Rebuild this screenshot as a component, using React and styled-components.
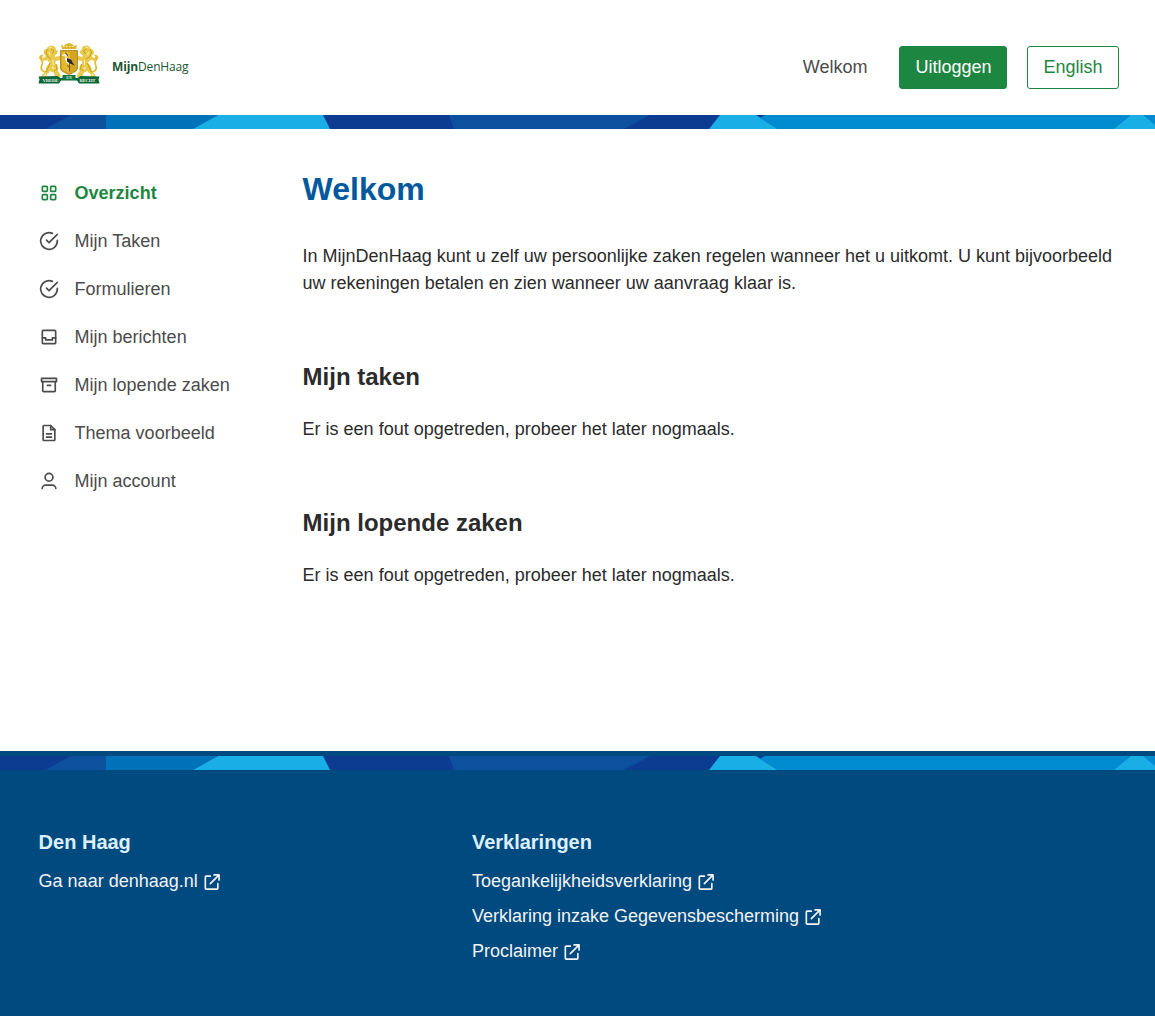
import React from "react";
import styled, { createGlobalStyle, css } from "styled-components";

const GlobalStyle = createGlobalStyle`
  *, *::before, *::after { box-sizing: border-box; }
  body {
    margin: 0;
    background: #fff;
    color: #2b2b2b;
    font-family: "Liberation Sans", Arial, sans-serif;
    font-size: 18px;
    line-height: 27px;
  }
  h1, h2, h3, p, ul { margin: 0; padding: 0; }
  ul { list-style: none; }
  a { color: inherit; text-decoration: none; }
`;

const Page = styled.div`
  display: flex;
  flex-direction: column;
  min-height: 1016px;
`;

const Header = styled.header`
  display: flex;
  align-items: center;
  justify-content: space-between;
  height: 115px;
  padding: 19px 36px 0 38px;
`;

const Brand = styled.a`
  display: flex;
  align-items: center;
  gap: 12px;
  padding-bottom: 6px;
`;

const Crest = styled.svg`
  display: block;
  width: 62px;
  height: 44px;
`;

const Wordmark = styled.span`
  padding-top: 6px;
  color: #1a5632;
  font: 400 12px/16px "Open Sans", "Noto Sans", sans-serif;
  letter-spacing: -0.14px;

  b { font-weight: 700; }
`;

const Actions = styled.div`
  display: flex;
  align-items: center;
  gap: 20px;
`;

const UserName = styled.span`
  margin-right: 11.500px;
  padding-top: 1px;
  color: #4b4b4b;
`;

const Button = styled.button`
  height: 43px;
  padding: 1px 15.500px 0;
  border: 1px solid #1d8640;
  border-radius: 3px;
  font: inherit;
  ${({ $primary }) =>
    $primary
      ? css`width: 108px; background: #1d8640; color: #fff;`
      : css`width: 92px; background: #fff; color: #1d8640;`}
`;

const Strip = styled.svg`
  display: block;
  width: 100%;
  height: 14px;
`;

const Body = styled.div`
  display: grid;
  grid-template-columns: 264px 1fr;
  height: 622px;
  padding: 40px 36px 0 38.600px;
`;

const NavList = styled.ul`
  display: flex;
  flex-direction: column;
`;

const NavLink = styled.a`
  display: flex;
  align-items: center;
  gap: 16px;
  height: 48px;
  color: ${({ $active }) => ($active ? "#1d8640" : "#4b4b4b")};
  font-weight: ${({ $active }) => ($active ? 700 : 400)};

  svg { margin-bottom: 1px; }
`;

const Glyph = styled.svg`
  display: block;
  flex: none;
  width: 20px;
  height: 20px;
  fill: none;
  stroke: currentColor;
  stroke-width: 2;
  stroke-linecap: round;
  stroke-linejoin: round;
`;

const Title = styled.h1`
  color: #00599d;
  font-size: 32px;
  line-height: 40px;
`;

const Intro = styled.p`
  margin-top: 34px;
`;

const Section = styled.section`
  margin-top: 64px;
`;

const SectionTitle = styled.h2`
  font-size: 24px;
  line-height: 32px;
`;

const Notice = styled.p`
  margin-top: 23px;
`;

const Footer = styled.footer`
  flex: 1;
  padding-top: 5px;
  background: #004a80;
`;

const FooterColumns = styled.div`
  display: grid;
  grid-template-columns: 433.300px 1fr;
  padding: 58px 36px 0 38.600px;
  color: #f3f3f3;
`;

const FooterTitle = styled.h3`
  color: #dceffb;
  font-size: 20px;
  line-height: 28px;
  margin-bottom: 8px;
`;

const FooterLink = styled.a`
  display: flex;
  align-items: center;
  gap: 4px;
  height: 35px;
`;

const icons = {
  grid: (
    <>
      <rect x="4" y="4" width="6" height="6" rx="1" />
      <rect x="14" y="4" width="6" height="6" rx="1" />
      <rect x="4" y="14" width="6" height="6" rx="1" />
      <rect x="14" y="14" width="6" height="6" rx="1" />
    </>
  ),
  check: (
    <>
      <path d="M22 11.08V12a10 10 0 1 1-5.93-9.14" />
      <path d="M22 4 12 14.01l-3-3" />
    </>
  ),
  inbox: (
    <>
      <rect x="4" y="4" width="16" height="16" rx="1" />
      <path d="M4 13h4v2.500h8V13h4" />
    </>
  ),
  archive: (
    <>
      <rect x="3" y="4" width="18" height="4" rx="0.500" />
      <path d="M4.500 8v11a1 1 0 0 0 1 1h13a1 1 0 0 0 1-1V8M10 12.500h4" />
    </>
  ),
  file: (
    <>
      <path d="M14 3v5h5" />
      <path d="M18 21H6a1 1 0 0 1-1-1V4a1 1 0 0 1 1-1h8l5 5v12a1 1 0 0 1-1 1zM9 13h6M9 17h6" />
    </>
  ),
  user: (
    <>
      <circle cx="12" cy="7.500" r="4.700" />
      <path d="M3.800 21c0-2.500 2.200-4 4.200-4h8c2 0 4.200 1.500 4.200 4" />
    </>
  ),
  external: (
    <>
      <path d="M10 5H5a1 1 0 0 0-1 1v13.500a1 1 0 0 0 1 1h13a1 1 0 0 0 1-1V14" />
      <path d="M10 14 20.500 3.500M14.500 3.500h6V9.500" />
    </>
  ),
};

function Icon({ name }) {
  return (
    <Glyph viewBox="0 0 24 24" aria-hidden="true">
      {icons[name]}
    </Glyph>
  );
}

function PatternStrip() {
  return (
    <Strip viewBox="0 0 1155 14" preserveAspectRatio="none" aria-hidden="true">
      <rect width="1155" height="14" fill="#0c3c91" />
      <path d="M45 14 71 0h35v14z" fill="#0d509d" />
      <path d="M106 0h112l-25 14h-87z" fill="#0072ba" />
      <path d="M193 14 218 0h105l7 14z" fill="#19aee5" />
      <path d="M449 0h201l-26 14H454z" fill="#0d509d" />
      <path d="M709 14 720 0h36l22 14z" fill="#19aee5" />
      <path d="m760 3 5-3h390v14H778z" fill="#008bcf" />
      <path d="m1114 14 17-14h12l12 10v4z" fill="#19aee5" />
    </Strip>
  );
}

function Lion() {
  return (
    <g>
      <path d="M11 30C6 31 2 28 3.500 24 5 21 5 19 2.500 17" fill="none" stroke="#e2bd35" strokeWidth="1.700" />
      <path d="M1 16c0-3 3-4 5-3-2 1-2 2-1 4-1 1-3 1-4-1z" fill="#e2bd35" />
      <path
        d="M9 6c1-2 4-3 6-2 2 0 3 2 3 4l2 1-1 3-2 1v2l4-1 2 1-1 3-4 1-1 2c3 2 4 5 3 8l2 3 1 3h-6l-1-4-4-2-3 3-1 3H3l2-3 3-2c-1-4 1-7 4-9l-3-3-4 1-1-2 4-3-2-2c-1-2 0-5 3-5z"
        fill="#e8ca4d"
      />
      <path d="m9 7-1 4 2 4 3 2M12 21l-2 5-2 4M18 22l1 5-3 2M13 7l3 2-2 3" fill="none" stroke="#c49a1d" strokeWidth=".9" />
      <path d="m11 6 3-1M11 10l1 3M15 18v5M14 25l2 2M8 32l-2 2" fill="none" stroke="#f8eda5" strokeWidth="1.100" />
    </g>
  );
}

function CityCrest() {
  return (
    <Crest viewBox="0 0 62 44" role="img" aria-label="Den Haag">
      <Lion />
      <g transform="matrix(-1 0 0 1 61.500 0)">
        <Lion />
      </g>
      <path d="m24 7-1-4 3 1 2-2 3-1 3 1 2 2 3-1-1 4z" fill="#dcb42e" />
      <path d="M25 4.500h12" stroke="#fff0a2" strokeWidth="1" strokeDasharray="1.500 1.500" />
      <path d="M22.500 8.500h17V26c0 3-4 4.500-8.500 6.500-4.500-2-8.500-3.500-8.500-6.500z" fill="#d4a31f" stroke="#a77d13" strokeWidth=".8" />
      <path d="M24 10h8v21c-5-2-8-3-8-5z" fill="#efc437" opacity=".65" />
      <path d="m23.500 13.500 3.500-2 2 1.500-.5 2.500 4 1.500 3 4.500-4 1-3-2-1.500-3 .5-3z" fill="#f7f4e7" />
      <path d="m29 16 4 1.500 3.500 6L32 21.500l-3-2z" fill="#2a2b27" />
      <path d="m27 11 2 1 .5 2" fill="none" stroke="#30312b" strokeWidth=".8" />
      <path d="M31.500 21v8.500M31.500 25l-2.500-1.500" fill="none" stroke="#60421b" strokeWidth=".8" />
      <path d="m0.500 34.500 19-.5 3 2h17l3-2 19 .5-1 3 1 4H41l-2-3H23l-2 3H.5l1-4z" fill="#0e6636" />
      <path d="M24.500 33h13v5h-13z" fill="#0b7940" />
      <g fill="#e2eee2" fontFamily="Liberation Serif, serif" fontWeight="700" fontSize="5" textAnchor="middle">
        <text x="12.500" y="40" textLength="16">VREDE</text>
        <text x="31" y="36.800" fontSize="4">EN</text>
        <text x="49.500" y="40" textLength="16">RECHT</text>
      </g>
    </Crest>
  );
}

const navItems = [
  { label: "Overzicht", icon: "grid", active: true },
  { label: "Mijn Taken", icon: "check" },
  { label: "Formulieren", icon: "check" },
  { label: "Mijn berichten", icon: "inbox" },
  { label: "Mijn lopende zaken", icon: "archive" },
  { label: "Thema voorbeeld", icon: "file" },
  { label: "Mijn account", icon: "user" },
];

const footerGroups = [
  { title: "Den Haag", links: ["Ga naar denhaag.nl"] },
  {
    title: "Verklaringen",
    links: ["Toegankelijkheidsverklaring", "Verklaring inzake Gegevensbescherming", "Proclaimer"],
  },
];

const errorText = "Er is een fout opgetreden, probeer het later nogmaals.";

export default function App() {
  return (
    <>
      <GlobalStyle />
      <Page>
        <Header>
          <Brand href="#">
            <CityCrest />
            <Wordmark><b>Mijn</b>DenHaag</Wordmark>
          </Brand>
          <Actions>
            <UserName>Welkom</UserName>
            <Button $primary>Uitloggen</Button>
            <Button>English</Button>
          </Actions>
        </Header>
        <PatternStrip />
        <Body>
          <nav>
            <NavList>
              {navItems.map(({ label, icon, active }) => (
                <li key={label}>
                  <NavLink href="#" $active={active}>
                    <Icon name={icon} />
                    {label}
                  </NavLink>
                </li>
              ))}
            </NavList>
          </nav>
          <main>
            <Title>Welkom</Title>
            <Intro>
              In MijnDenHaag kunt u zelf uw persoonlijke zaken regelen wanneer het u uitkomt. U kunt bijvoorbeeld uw
              rekeningen betalen en zien wanneer uw aanvraag klaar is.
            </Intro>
            <Section>
              <SectionTitle>Mijn taken</SectionTitle>
              <Notice>{errorText}</Notice>
            </Section>
            <Section>
              <SectionTitle>Mijn lopende zaken</SectionTitle>
              <Notice>{errorText}</Notice>
            </Section>
          </main>
        </Body>
        <Footer>
          <PatternStrip />
          <FooterColumns>
            {footerGroups.map(({ title, links }) => (
              <div key={title}>
                <FooterTitle>{title}</FooterTitle>
                <ul>
                  {links.map((link) => (
                    <li key={link}>
                      <FooterLink href="#">
                        {link}
                        <Icon name="external" />
                      </FooterLink>
                    </li>
                  ))}
                </ul>
              </div>
            ))}
          </FooterColumns>
        </Footer>
      </Page>
    </>
  );
}
